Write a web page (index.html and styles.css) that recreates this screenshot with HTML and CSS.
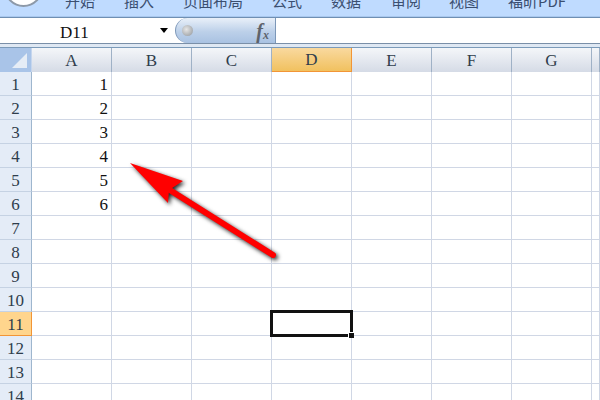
FILE: index.html
```html
<!DOCTYPE html>
<html>
<head>
    <meta charset="utf-8" />
    <title>Excel</title>
    <link rel="stylesheet" href="styles.css">
</head>
<body>
    <div class="ribbon">
        <div class="logo"></div>
        <span class="tab t1">开始</span>
        <span class="tab t2">插入</span>
        <span class="tab t3">页面布局</span>
        <span class="tab t4">公式</span>
        <span class="tab t5">数据</span>
        <span class="tab t6">审阅</span>
        <span class="tab t7">视图</span>
        <span class="tab t8">福昕PDF</span>
    </div>
    <div class="fbar">
        <div class="name">D11</div>
        <div class="drop"></div>
        <div class="fxbtn">
            <span class="dot"></span>
            <span class="fx">f<sub>x</sub></span>
        </div>
        <div class="finput"></div>
    </div>
    <div class="gap"></div>
    <table class="sheet">
        <tr class="cols">
            <th class="corner"><div class="tri"></div></th>
            <th>A</th><th>B</th><th>C</th><th class="sel">D</th><th>E</th><th>F</th><th>G</th><th class="last"></th>
        </tr>
        <tr><th>1</th><td>1</td><td></td><td></td><td></td><td></td><td></td><td></td><td></td></tr>
        <tr><th>2</th><td>2</td><td></td><td></td><td></td><td></td><td></td><td></td><td></td></tr>
        <tr><th>3</th><td>3</td><td></td><td></td><td></td><td></td><td></td><td></td><td></td></tr>
        <tr><th>4</th><td>4</td><td></td><td></td><td></td><td></td><td></td><td></td><td></td></tr>
        <tr><th>5</th><td>5</td><td></td><td></td><td></td><td></td><td></td><td></td><td></td></tr>
        <tr><th>6</th><td>6</td><td></td><td></td><td></td><td></td><td></td><td></td><td></td></tr>
        <tr><th>7</th><td></td><td></td><td></td><td></td><td></td><td></td><td></td><td></td></tr>
        <tr><th>8</th><td></td><td></td><td></td><td></td><td></td><td></td><td></td><td></td></tr>
        <tr><th>9</th><td></td><td></td><td></td><td></td><td></td><td></td><td></td><td></td></tr>
        <tr><th>10</th><td></td><td></td><td></td><td></td><td></td><td></td><td></td><td></td></tr>
        <tr>
            <th class="sel">11</th><td></td><td></td><td></td>
            <td class="active"><span class="box"></span><span class="handle"></span></td>
            <td></td><td></td><td></td><td></td>
        </tr>
        <tr><th>12</th><td></td><td></td><td></td><td></td><td></td><td></td><td></td><td></td></tr>
        <tr><th>13</th><td></td><td></td><td></td><td></td><td></td><td></td><td></td><td></td></tr>
        <tr><th>14</th><td></td><td></td><td></td><td></td><td></td><td></td><td></td><td></td></tr>
    </table>
    <svg class="arrow" width="600" height="400" viewBox="0 0 600 400">
        <line x1="273" y1="255" x2="165" y2="187" stroke="#f00" stroke-width="6" stroke-linecap="round" />
        <polygon points="130,163 183,181 169,190 168,203" fill="#f00" />
    </svg>
</body>
</html>
```

FILE: styles.css
```css
html, body {
    margin: 0;
    height: 400px;
    overflow: hidden;
    background: #fff;
}

body {
    position: relative;
    font-family: "Liberation Serif", "Noto Sans CJK SC", serif;
    font-size: 17px;
    color: #111;
}

/* ribbon tabs, cut off by the top of the picture */
.ribbon {
    position: relative;
    height: 16px;
    overflow: hidden;
    background: #bfdbff;
    border-bottom: 1px solid #a9c8ee;
}

.logo {
    position: absolute;
    left: 4px;
    top: -32px;
    width: 35px;
    height: 35px;
    border-radius: 50%;
    background: #fff;
    border: 2px solid #8d99a8;
}

.tab {
    position: absolute;
    top: -10px;
    font-family: "Noto Sans CJK SC", sans-serif;
    font-size: 15px;
    line-height: 22px;
    color: #3b4f70;
    white-space: nowrap;
}

.t1 { left: 65px; }
.t2 { left: 124px; }
.t3 { left: 183px; }
.t4 { left: 272px; }
.t5 { left: 331px; }
.t6 { left: 391px; }
.t7 { left: 449px; }
.t8 { left: 508px; }

/* name box and formula bar */
.fbar {
    display: flex;
    height: 25px;
    background: #fff;
    border-top: 1px solid #6f8fb3;
    border-bottom: 1px solid #7a8fa8;
}

.name {
    width: 160px;
    padding-left: 60px;
    box-sizing: border-box;
    line-height: 29px;
}

.drop {
    width: 0;
    height: 0;
    margin: 10px 7px 0 0;
    border-left: 4px solid transparent;
    border-right: 4px solid transparent;
    border-top: 5px solid #000;
}

.fxbtn {
    position: relative;
    width: 101px;
    box-sizing: border-box;
    border: 1px solid #7c97b8;
    border-width: 0 1px 0 1px;
    border-radius: 13px 0 0 13px;
    background: linear-gradient(#e9f0f9, #bcd0e9 55%, #a9c2e2);
}

.dot {
    position: absolute;
    left: 6px;
    top: 7px;
    width: 11px;
    height: 11px;
    border-radius: 50%;
    background: radial-gradient(circle at 40% 40%, #e6e6e6, #8f9499);
}

.fx {
    position: absolute;
    right: 6px;
    top: 1px;
    font-style: italic;
    font-weight: bold;
    font-size: 20px;
    line-height: 25px;
    color: #5e636b;
}

.fx sub {
    font-size: 12px;
    line-height: 0;
    vertical-align: -1px;
}

.finput {
    flex: 1;
}

.gap {
    height: 3px;
    background: #dfe8f3;
    border-bottom: 1px solid #7b9ab9;
}

/* the grid */
.sheet {
    table-layout: fixed;
    width: 600px;
    border-spacing: 0;
}

.sheet th, .sheet td {
    box-sizing: border-box;
    height: 24px;
    width: 80px;
    padding: 3px 0 0;
    font-weight: normal;
}

.sheet td {
    text-align: right;
    padding-right: 3px;
    border-right: 1px solid #d0d7e5;
    border-bottom: 1px solid #d0d7e5;
}

.sheet th {
    text-align: center;
    background: #e4ecf7;
    border-right: 1px solid #9eb6ce;
    border-bottom: 1px solid #c5d2e3;
    color: #2f3d4c;
}

.cols th {
    padding-top: 1px;
    background: linear-gradient(#f4f6f9, #d5dbe6);
    border-right-color: #9fb1c6;
    border-bottom: 0;
}

.sheet .corner {
    position: relative;
    width: 32px;
    background: #a9c4e8;
    border-right: 1px solid #c5d6ee;
}

.tri {
    position: absolute;
    right: 4px;
    bottom: 4px;
    width: 0;
    height: 0;
    border-left: 15px solid transparent;
    border-bottom: 15px solid #e6edf6;
}

.sheet th:first-child {
    width: 32px;
}

.sheet th.last {
    width: 8px;
}

.sheet th.sel {
    background: linear-gradient(#f9d99f, #f1c15f);
    border-right: 1px solid #f29536;
    border-bottom: 1px solid #f29536;
}

.sheet tr:not(.cols) th.sel {
    background: #ffd58d;
}

.active {
    position: relative;
}

.box {
    position: absolute;
    left: -2px;
    top: -2px;
    right: -2px;
    bottom: -2px;
    border: 3px solid #111;
}

.handle {
    position: absolute;
    right: -3px;
    bottom: -3px;
    width: 5px;
    height: 5px;
    background: #111;
    border-left: 1px solid #fff;
    border-top: 1px solid #fff;
}

.arrow {
    position: absolute;
    left: 0;
    top: 0;
    filter: drop-shadow(2px 2px 2px rgba(0, 0, 0, 0.85));
}
```
